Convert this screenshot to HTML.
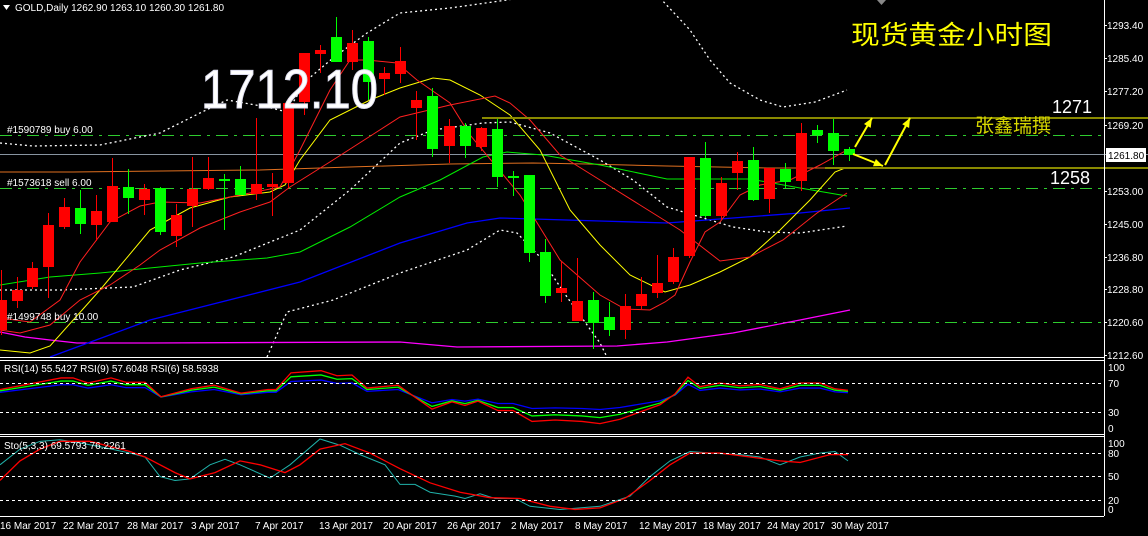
<!DOCTYPE html>
<html><head><meta charset="utf-8"><style>
html,body{margin:0;padding:0;background:#000;width:1148px;height:536px;overflow:hidden}
svg{display:block}
text{font-family:"Liberation Sans",sans-serif}
</style></head><body>
<svg id="s" width="1148" height="536" viewBox="0 0 1148 536" xmlns="http://www.w3.org/2000/svg">
<rect width="1148" height="536" fill="#000"/>
<g id="g"></g>
<line x1="1104.5" y1="0" x2="1104.5" y2="516" stroke="#fff"/>
<line x1="0" y1="357.5" x2="1104" y2="357.5" stroke="#fff"/>
<line x1="0" y1="360.5" x2="1104" y2="360.5" stroke="#fff"/>
<line x1="0" y1="434.5" x2="1104" y2="434.5" stroke="#fff"/>
<line x1="0" y1="436.5" x2="1104" y2="436.5" stroke="#fff"/>
<line x1="0" y1="516.5" x2="1104" y2="516.5" stroke="#fff"/>
<g stroke="#fff" stroke-dasharray="3,3" stroke-width="1">
<line x1="0" y1="383.5" x2="1104" y2="383.5"/>
<line x1="0" y1="412.5" x2="1104" y2="412.5"/>
<line x1="0" y1="453.5" x2="1104" y2="453.5"/>
<line x1="0" y1="476.5" x2="1104" y2="476.5"/>
<line x1="0" y1="500.5" x2="1104" y2="500.5"/>
</g>
<g fill="#fff" font-size="10">
<text x="1107" y="29">1293.40</text>
<text x="1107" y="62">1285.40</text>
<text x="1107" y="95">1277.20</text>
<text x="1107" y="129">1269.20</text>
<text x="1107" y="195">1253.00</text>
<text x="1107" y="228">1245.00</text>
<text x="1107" y="261">1236.80</text>
<text x="1107" y="293">1228.80</text>
<text x="1107" y="326">1220.60</text>
<text x="1107" y="359">1212.60</text>
<text x="1108" y="371">100</text>
<text x="1108" y="387">70</text>
<text x="1108" y="416">30</text>
<text x="1108" y="432">0</text>
<text x="1108" y="447">100</text>
<text x="1108" y="457">80</text>
<text x="1108" y="480">50</text>
<text x="1108" y="504">20</text>
<text x="1108" y="513">0</text>
</g>
<g stroke="#fff">
<line x1="1104" y1="25.5" x2="1107" y2="25.5"/><line x1="1104" y1="58.5" x2="1107" y2="58.5"/>
<line x1="1104" y1="91.5" x2="1107" y2="91.5"/><line x1="1104" y1="125.5" x2="1107" y2="125.5"/>
<line x1="1104" y1="191.5" x2="1107" y2="191.5"/><line x1="1104" y1="224.5" x2="1107" y2="224.5"/>
<line x1="1104" y1="257.5" x2="1107" y2="257.5"/><line x1="1104" y1="289.5" x2="1107" y2="289.5"/>
<line x1="1104" y1="322.5" x2="1107" y2="322.5"/><line x1="1104" y1="355.5" x2="1107" y2="355.5"/>
</g>
<rect x="1106" y="148" width="40" height="14" fill="#fff"/>
<text x="1108" y="159" font-size="10" fill="#000">1261.80</text>
<g fill="#fff" font-size="10">
<text x="0" y="529">16 Mar 2017</text><text x="63" y="529">22 Mar 2017</text>
<text x="127" y="529">28 Mar 2017</text><text x="191" y="529">3 Apr 2017</text>
<text x="255" y="529">7 Apr 2017</text><text x="319" y="529">13 Apr 2017</text>
<text x="383" y="529">20 Apr 2017</text><text x="447" y="529">26 Apr 2017</text>
<text x="511" y="529">2 May 2017</text><text x="575" y="529">8 May 2017</text>
<text x="639" y="529">12 May 2017</text><text x="703" y="529">18 May 2017</text>
<text x="767" y="529">24 May 2017</text><text x="831" y="529">30 May 2017</text>
</g>
<path d="M3,5 L10,5 L6.5,10 Z" fill="#fff"/>
<text x="15" y="11" font-size="10" fill="#fff">GOLD,Daily  1262.90 1263.10 1260.30 1261.80</text>
<text x="7" y="133" font-size="10" fill="#fff">#1590789 buy 6.00</text>
<text x="7" y="186" font-size="10" fill="#fff">#1573618 sell 6.00</text>
<text x="7" y="320" font-size="10" fill="#fff">#1499748 buy 10.00</text>
<text x="4" y="372" font-size="10" fill="#fff">RSI(14) 55.5427  RSI(9) 57.6048  RSI(6) 58.5938</text>
<text x="4" y="449" font-size="10" fill="#fff">Sto(5,3,3) 69.5793 76.2261</text>
<text x="201" y="108" font-size="55" fill="#fff" stroke="#dde" stroke-width="1" textLength="177" lengthAdjust="spacingAndGlyphs">1712.10</text>
<text x="851" y="44" font-size="26" fill="#ffff00" font-family="'Liberation Sans','Noto Sans CJK SC',sans-serif" textLength="201" lengthAdjust="spacingAndGlyphs">现货黄金小时图</text>
<text x="975" y="132" font-size="19" fill="#d8d800" font-family="'Liberation Sans','Noto Sans CJK SC',sans-serif" textLength="76" lengthAdjust="spacingAndGlyphs">张鑫瑞撰</text>
<text x="1052" y="113" font-size="18" fill="#fff">1271</text>
<text x="1050" y="184" font-size="18" fill="#fff">1258</text>
<path d="M877,0 L886,0 L881.5,5 Z" fill="#888"/>
</svg>
<script>
var NS="http://www.w3.org/2000/svg",g=document.getElementById("g");
function el(t,a){var e=document.createElementNS(NS,t);for(var k in a)e.setAttribute(k,a[k]);g.appendChild(e);return e}
function pl(pts,c,w,da){var a={points:pts.map(function(p){return p.join(",")}).join(" "),fill:"none",stroke:c,"stroke-width":w||1};if(da)a["stroke-dasharray"]=da;el("polyline",a)}
el("line",{x1:0,y1:135.5,x2:1104,y2:135.5,stroke:"#2ecc2e","stroke-dasharray":"12,6,3,6"});
el("line",{x1:0,y1:188.5,x2:1104,y2:188.5,stroke:"#2ecc2e","stroke-dasharray":"12,6,3,6"});
el("line",{x1:0,y1:322.5,x2:1104,y2:322.5,stroke:"#2ecc2e","stroke-dasharray":"12,6,3,6"});
el("line",{x1:0,y1:154.5,x2:1148,y2:154.5,stroke:"#8894a0"});
pl([[0,172],[73,172],[260,170],[350,167],[450,164],[533,163],[587,164],[667,166],[767,168],[848,168]],"#e07020",1);
var wd="2,3";
pl([[0,143],[33,146],[100,145],[160,133],[200,113],[227,100],[267,107],[287,112],[307,80],[333,58],[367,33],[400,13],[450,8],[500,1],[520,-2]],"#fff",1.3,wd);
pl([[660,-2],[690,30],[710,60],[730,83],[760,100],[783,107],[815,102],[847,90]],"#fff",1.3,wd);
pl([[0,290],[60,290],[133,287],[180,270],[233,257],[300,230],[350,190],[400,143],[433,130],[483,123],[510,122],[550,133],[600,160],[633,180],[667,207],[700,217],[733,227],[767,232],[800,233],[847,226]],"#fff",1.3,wd);
pl([[267,357],[287,312],[333,300],[400,273],[467,250],[500,230],[517,233],[540,257],[567,297],[600,343],[607,357]],"#fff",1.3,wd);
pl([[0,332],[25,337],[50,340],[77,343],[150,343],[400,342],[457,347],[617,346],[667,342],[733,333],[800,320],[850,310]],"#ff00ff",1.3);
pl([[50,357],[150,320],[300,282],[400,243],[467,223],[500,218],[600,221],[667,223],[733,218],[800,213],[850,208]],"#0000ff",1.3);
pl([[0,285],[50,277],[100,273],[200,263],[267,258],[300,252],[350,227],[400,197],[440,180],[483,157],[507,152],[543,155],[600,165],[667,179],[750,179],[800,188],[847,196]],"#00ee00",1);
pl([[0,350],[30,353],[50,346],[100,290],[150,230],[190,208],[230,197],[270,192],[285,185],[300,160],[330,120],[370,100],[400,88],[433,78],[450,80],[480,95],[510,115],[540,150],[570,210],[600,245],[630,275],[665,292],[690,285],[720,272],[750,257],[780,230],[810,200],[835,172],[845,168]],"#ffff00",1);
pl([[0,330],[20,333],[50,325],[80,300],[110,285],[140,265],[160,250],[200,228],[240,212],[270,202],[290,187],[333,160],[400,117],[450,105],[495,96],[510,103],[530,120],[560,155],[600,180],[640,205],[680,230],[720,261],[750,257],[783,240],[817,213],[847,193]],"#ff2020",1);
pl([[0,318],[30,322],[60,300],[80,262],[110,222],[140,206],[160,202],[200,203],[240,195],[280,187],[300,150],[330,90],[350,60],[367,60],[397,63],[417,80],[450,103],[470,135],[520,195],[560,260],[600,295],[625,309],[650,310],[665,302],[675,295],[690,262],[705,232],[720,222],[740,195],[760,185],[790,180],[820,165],[847,150]],"#ff2020",1);
var C=[[1,"r",300,330,270,335],[17,"r",290,301,277,308],[32,"r",268,287,262,289],[48,"r",225,267,213,298],[64,"r",207,227,198,229],[80,"g",208,224,190,234],[96,"r",211,225,195,241],[112,"r",186,222,158,222],[128,"g",187,198,169,214],[144,"r",189,200,184,215],[160,"g",188,232,187,235],[176,"r",215,236,204,247],[192,"r",189,206,157,227],[208,"r",178,189,157,190],[224,"g",179,181,174,230],[240,"g",179,195,166,195],[256,"r",184,194,118,200],[272,"r",184,187,173,216],[288,"r",103,183,98,188],[304,"r",53,102,53,115],[320,"r",50,54,45,73],[336,"g",37,62,17,62],[352,"r",43,62,30,70],[368,"g",41,82,37,100],[384,"r",73,79,67,95],[400,"r",61,74,47,83],[416,"r",100,108,91,140],[432,"g",96,149,88,157],[449,"r",126,146,119,163],[465,"g",126,146,123,158],[481,"r",128,147,127,151],[497,"g",129,177,117,187],[513,"g",176,178,171,196],[529,"g",175,253,175,262],[545,"g",252,296,239,303],[561,"r",288,293,262,302],[577,"r",301,321,258,321],[593,"g",300,323,292,349],[609,"g",317,330,302,336],[625,"r",306,330,294,339],[641,"r",294,306,277,309],[657,"r",283,293,255,298],[673,"r",257,282,248,284],[689,"r",157,256,157,258],[705,"g",158,216,142,218],[721,"r",183,216,177,220],[737,"r",161,173,152,190],[753,"g",160,200,147,201],[769,"r",168,199,168,213],[785,"g",169,182,163,188],[801,"r",133,181,123,191],[817,"g",130,135,125,143],[833,"g",133,151,119,165],[849,"g",149,155,147,161]];
C.forEach(function(c){var col=c[1]=="r"?"#ff0000":"#00ff00";
el("line",{x1:c[0]+.5,y1:c[4],x2:c[0]+.5,y2:c[5],stroke:col});
el("rect",{x:c[0]-5,y:c[2],width:11,height:Math.max(2,c[3]-c[2]),fill:col});});
el("line",{x1:482,y1:118,x2:1148,y2:118,stroke:"#8a8a00","stroke-width":2});
el("line",{x1:825,y1:168,x2:1148,y2:168,stroke:"#8a8a00","stroke-width":2});
function arr(x1,y1,x2,y2){el("line",{x1:x1,y1:y1,x2:x2,y2:y2,stroke:"#ffff00","stroke-width":2});
var a=Math.atan2(y2-y1,x2-x1),L=10,w=0.4;
el("polygon",{points:[x2,y2,x2-L*Math.cos(a-w),y2-L*Math.sin(a-w),x2-L*Math.cos(a+w),y2-L*Math.sin(a+w)].join(","),fill:"#ffff00"});}
arr(855,147,872,118);arr(853,154,883,166);arr(885,165,910,118);
// RSI
var R=[[0,61],[23,67],[61,77],[73,77],[88,70],[111,77],[126,71],[145,71],[161,51],[191,62],[214,67],[241,56],[268,61],[276,61],[291,84],[321,87],[337,80],[352,81],[367,63],[398,67],[432,34],[452,44],[465,39],[478,45],[498,32],[513,32],[532,17],[555,19],[582,17],[600,14],[620,20],[640,30],[660,40],[675,55],[688,78],[700,65],[720,70],[740,66],[760,68],[780,62],[800,70],[820,70],[835,62],[848,60]];
function rs(kh,kl){return R.map(function(p){var v=p[1],k=v>50?kh:kl;return [p[0],433.75-(50+(v-50)*k)*0.725]})}
pl(rs(0.65,0.46),"#0000ff",1.3);pl(rs(0.84,0.77),"#00ff00",1.3);pl(rs(1,1),"#ff0000",1.3);
var SC=[[0,65],[20,85],[40,95],[60,97],[80,93],[100,88],[130,80],[145,75],[160,50],[175,45],[190,47],[210,65],[225,72],[240,65],[270,48],[290,65],[320,98],[340,90],[360,78],[385,65],[400,40],[415,40],[430,30],[455,25],[465,22],[480,28],[495,22],[515,22],[530,12],[560,8],[600,12],[630,25],[650,50],[670,70],[690,82],[710,80],[740,78],[760,75],[780,65],[800,75],[820,80],[835,82],[848,70]];
var SR=[[0,45],[20,70],[40,85],[60,95],[90,95],[130,82],[145,75],[175,55],[190,47],[215,55],[240,70],[260,65],[285,55],[300,65],[320,85],[345,92],[370,80],[400,60],[430,42],[460,30],[490,23],[520,22],[550,12],[575,8],[600,10],[625,22],[650,45],[670,65],[690,80],[720,80],[750,75],[780,70],[800,68],[830,78],[848,78]];
function st(A){return A.map(function(p){return [p[0],515.7-p[1]*0.783]})}
pl(st(SC),"#20b2aa",1);pl(st(SR),"#ff0000",1.3);
</script>
</body></html>
